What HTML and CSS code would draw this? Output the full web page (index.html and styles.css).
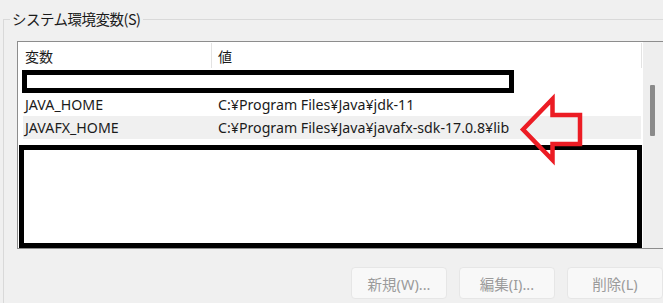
FILE: index.html
```html
<!DOCTYPE html>
<html lang="ja">
<head>
<meta charset="utf-8">
<link rel="stylesheet" href="styles.css">
</head>
<body>
<div class="page">
  <fieldset class="group">
    <legend class="group-title">システム環境変数(S)</legend>
    <div class="listbox">
      <div class="list-main">
        <div class="list-header">
          <div class="hcell hcell-name">変数</div>
          <div class="hcell hcell-value">値</div>
        </div>
        <div class="redact-row"><div class="redact-bar"></div></div>
        <div class="row row-a">
          <span class="cell">JAVA_HOME</span>
          <span class="cell">C:¥Program Files¥Java¥jdk-11</span>
        </div>
        <div class="row row-b selected">
          <span class="cell">JAVAFX_HOME</span>
          <span class="cell">C:¥Program Files¥Java¥javafx-sdk-17.0.8¥lib</span>
        </div>
        <div class="redact-box"></div>
      </div>
      <div class="scrollbar"><div class="thumb"></div></div>
    </div>
    <div class="buttons">
      <button class="btn" disabled>新規(W)...</button>
      <button class="btn" disabled>編集(I)...</button>
      <button class="btn" disabled>削除(L)</button>
    </div>
  </fieldset>
  <svg class="arrow" width="70" height="76" viewBox="515 92 70 76" aria-hidden="true">
    <polygon points="523,129.5 552.5,99 552.5,115 580,115 580,144 552.5,144 552.5,160" fill="none" stroke="#ec1c24" stroke-width="4.5" stroke-linejoin="miter"/>
  </svg>
</div>
</body>
</html>
```
FILE: styles.css
```css
html, body {
  margin: 0;
  padding: 0;
  overflow: hidden;
}
body {
  background: #f0f0f0;
  width: 663px;
  height: 303px;
  font-family: "Noto Sans", "Noto Sans CJK JP", sans-serif;
  color: #1b1b1b;
}
.page {
  position: relative;
  width: 663px;
  height: 303px;
}
.group {
  margin: 0 0 0 3px;
  padding: 12px 0 0 13px;
  border: none;
  border-top: 1px solid #d9d9d9;
  border-left: 1px solid #d9d9d9;
  min-width: 0;
  height: 303px;
  box-sizing: border-box;
  position: relative;
  top: 9px;
}
.group-title {
  margin-left: -7px;
  padding: 0 2px;
  font-family: "Noto Sans CJK JP", sans-serif;
  font-size: 14.5px;
  line-height: 20px;
  letter-spacing: -0.5px;
  color: #1b1b1b;
}
.listbox {
  display: flex;
  height: 208px;
  box-sizing: border-box;
  border: 1px solid #8d8d8d;
  border-right: none;
  background: #fff;
  width: 647px;
}
.list-main {
  width: 625px;
  display: flex;
  flex-direction: column;
}
.list-header {
  display: flex;
  height: 28px;
  padding: 1px 0 1px 0;
  box-sizing: border-box;
  font-family: "Noto Sans CJK JP", sans-serif;
  font-size: 14px;
}
.hcell {
  display: flex;
  align-items: center;
  border-right: 1px solid #e3e3e3;
  box-sizing: border-box;
}
.hcell-name {
  width: 194px;
  padding-left: 7px;
}
.hcell-value {
  width: 430px;
  padding-left: 6px;
}
.redact-row {
  height: 24px;
}
.redact-bar {
  margin: 1px 0 0 4px;
  width: 492px;
  height: 23px;
  box-sizing: border-box;
  border: 5px solid #000;
}
.row {
  display: grid;
  grid-template-columns: 193px 1fr;
  align-items: center;
  margin-left: 5px;
  width: 618px;
  padding-left: 2px;
  box-sizing: border-box;
  font-size: 14.2px;
  color: #1b1b1b;
}
.row-a { height: 23px; }
.row-b { height: 24px; }
.selected { background: #f0f0f0; }
.cell { white-space: nowrap; }
.redact-box {
  margin: 6px 0 0 1px;
  width: 623px;
  height: 103px;
  flex: none;
  box-sizing: border-box;
  border: 5px solid #000;
  background: #fff;
}
.scrollbar {
  margin-left: 1px;
  width: 21px;
  background: #eeeeee;
  position: relative;
}
.thumb {
  margin: 43px 0 0 7px;
  width: 5px;
  height: 51px;
  background: #8a8a8a;
  border-radius: 1px;
}
.buttons {
  display: flex;
  justify-content: flex-end;
  gap: 12px;
  margin-top: 18px;
  width: 646px;
}
.btn {
  width: 96px;
  height: 32px;
  border: 1px solid #e6e6e6;
  border-radius: 4px;
  background: #f8f8f8;
  color: #9b9b9b;
  font-family: "Noto Sans", "Noto Sans CJK JP", sans-serif;
  font-size: 14.5px;
  padding: 0;
}
.arrow {
  position: absolute;
  left: 515px;
  top: 92px;
}
```
